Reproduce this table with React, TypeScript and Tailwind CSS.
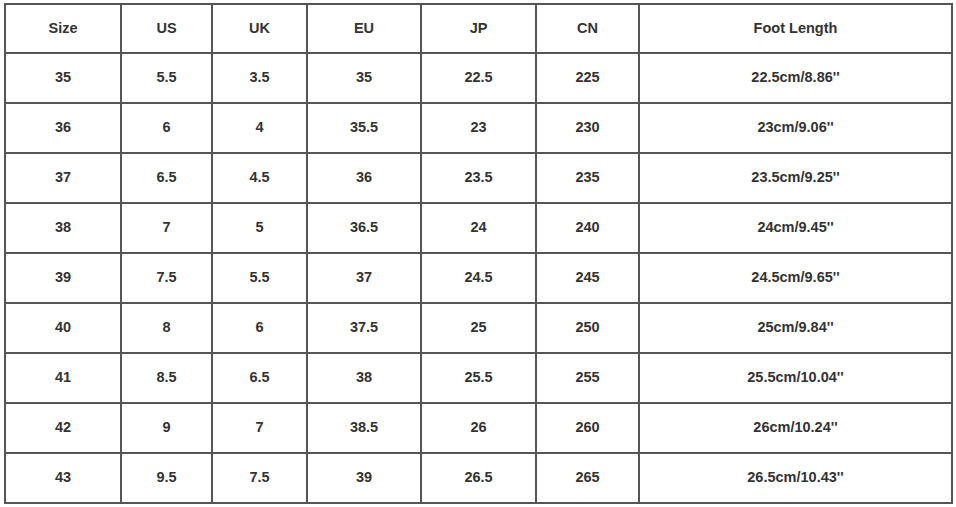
import React from "react"

const headers = ["Size", "US", "UK", "EU", "JP", "CN", "Foot Length"]

const widths = ["w-[116px]", "w-[91px]", "w-[95px]", "w-[114px]", "w-[115px]", "w-[103px]", "w-[313px]"]

const rows = [
  ["35", "5.5", "3.5", "35", "22.5", "225", "22.5cm/8.86''"],
  ["36", "6", "4", "35.5", "23", "230", "23cm/9.06''"],
  ["37", "6.5", "4.5", "36", "23.5", "235", "23.5cm/9.25''"],
  ["38", "7", "5", "36.5", "24", "240", "24cm/9.45''"],
  ["39", "7.5", "5.5", "37", "24.5", "245", "24.5cm/9.65''"],
  ["40", "8", "6", "37.5", "25", "250", "25cm/9.84''"],
  ["41", "8.5", "6.5", "38", "25.5", "255", "25.5cm/10.04''"],
  ["42", "9", "7", "38.5", "26", "260", "26cm/10.24''"],
  ["43", "9.5", "7.5", "39", "26.5", "265", "26.5cm/10.43''"],
]

const App: React.FC = () => {
  return (
    <div className="w-[956px] h-[507px] bg-white pt-[3px] pl-[4px] font-['Liberation_Sans',Arial,sans-serif] text-[#333] text-[14.5px] font-bold">
      <table className="border-collapse table-fixed w-[949px]">
        <thead>
          <tr>
            {headers.map((h, i) => (
              <th
                key={h}
                className={`${widths[i]} h-[49px] border-2 border-[#555] text-center align-middle font-bold`}
              >
                {h}
              </th>
            ))}
          </tr>
        </thead>
        <tbody>
          {rows.map(row => (
            <tr key={row[0]}>
              {row.map((cell, i) => (
                <td key={i} className="h-[50px] border-2 border-[#555] text-center align-middle">
                  {cell}
                </td>
              ))}
            </tr>
          ))}
        </tbody>
      </table>
    </div>
  )
}

export default App
